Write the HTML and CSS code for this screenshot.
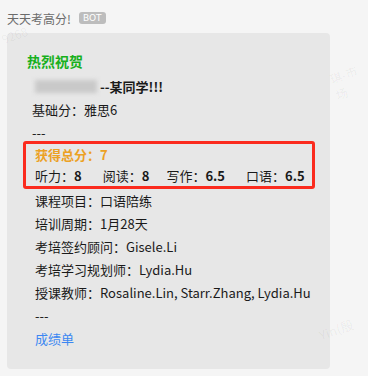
FILE: index.html
```html
<!DOCTYPE html>
<html lang="zh">
<head>
<meta charset="utf-8">
<link rel="stylesheet" href="styles.css">
</head>
<body>
<div class="page">
  <div class="sender">
    <span class="name">天天考高分!</span>
    <span class="bot">BOT</span>
  </div>
  <div class="bubble">
    <div class="title">热烈祝贺</div>
    <div class="line ind8 who"><span class="blur"></span><b>--某同学!!!</b></div>
    <div class="line ind5">基础分：雅思6</div>
    <div class="line ind5">---</div>
    <div class="scorebox">
      <div class="line total">获得总分：7</div>
      <div class="line scores">
        <span class="item">听力：<b>8</b></span>
        <span class="item">阅读：<b>8</b></span>
        <span class="item">写作：<b>6.5</b></span>
        <span class="item">口语：<b>6.5</b></span>
      </div>
    </div>
    <div class="line ind8">课程项目：口语陪练</div>
    <div class="line ind8">培训周期：1月28天</div>
    <div class="line ind8">考培签约顾问：Gisele.Li</div>
    <div class="line ind8">考培学习规划师：Lydia.Hu</div>
    <div class="line ind8">授课教师：Rosaline.Lin, Starr.Zhang, Lydia.Hu</div>
    <div class="line ind8">---</div>
    <div class="line ind8"><a class="link">成绩单</a></div>
  </div>
  <span class="wm wm1">9268</span>
  <span class="wm wm2">琪-市场</span>
  <span class="wm wm3">Yin(殷</span>
</div>
</body>
</html>
```
FILE: styles.css
```css
html, body {
  margin: 0;
  padding: 0;
  background: #f5f5f5;
}
body {
  font-family: "Noto Sans CJK SC", "Noto Sans", sans-serif;
  font-size: 13px;
  color: #1a1a1a;
}
.page {
  position: relative;
  width: 368px;
  height: 376px;
  overflow: hidden;
  padding: 9px 0 0 7px;
  box-sizing: border-box;
}
.sender {
  display: flex;
  align-items: center;
  height: 18px;
  gap: 8px;
}
.sender .name {
  font-size: 12px;
  color: #6b6b6b;
}
.bot {
  background: #bdbdbd;
  color: #fff;
  font-family: "DejaVu Sans", sans-serif;
  font-size: 9px;
  line-height: 12px;
  padding: 0 4px;
  border-radius: 3px;
}
.bubble {
  margin-top: 6px;
  width: 323px;
  box-sizing: border-box;
  background: #e7e7e7;
  border-radius: 4px;
  padding: 16px 10px 19px 20px;
}
.title {
  font-size: 14px;
  font-weight: bold;
  color: #17b01c;
  line-height: 24px;
  margin-bottom: 1px;
}
.line {
  line-height: 23px;
  white-space: nowrap;
}
.line b {
  font-weight: bold;
}
.ind8 { padding-left: 8px; }
.ind5 { padding-left: 5px; }
.who {
  display: flex;
  align-items: center;
  height: 24px;
}
.blur {
  display: inline-block;
  width: 62px;
  height: 13px;
  background: #c9c9c9;
  filter: blur(2px);
  margin-right: 3px;
}
.scorebox {
  margin: -3px 0 0 -4px;
  width: 292px;
  box-sizing: border-box;
  border: 3px solid #fb2b1e;
  border-radius: 3px;
  padding: 0 0 0 9px;
}
.scorebox .line {
  line-height: 21px;
}
.total {
  color: #eca124;
  font-weight: bold;
  font-size: 13px;
}
.scores {
  display: flex;
}
.scores .item {
  margin-right: 21px;
}
.scores .item:nth-child(2) { margin-right: 17px; }
.link {
  color: #3c87f2;
}
.wm {
  position: absolute;
  color: rgba(0, 0, 0, 0.05);
  font-size: 12px;
  transform: rotate(-20deg);
}
.wm1 { left: 1px; top: 26px; }
.wm2 { left: 332px; top: 64px; }
.wm3 { left: 318px; top: 320px; font-size: 13px; }
```
